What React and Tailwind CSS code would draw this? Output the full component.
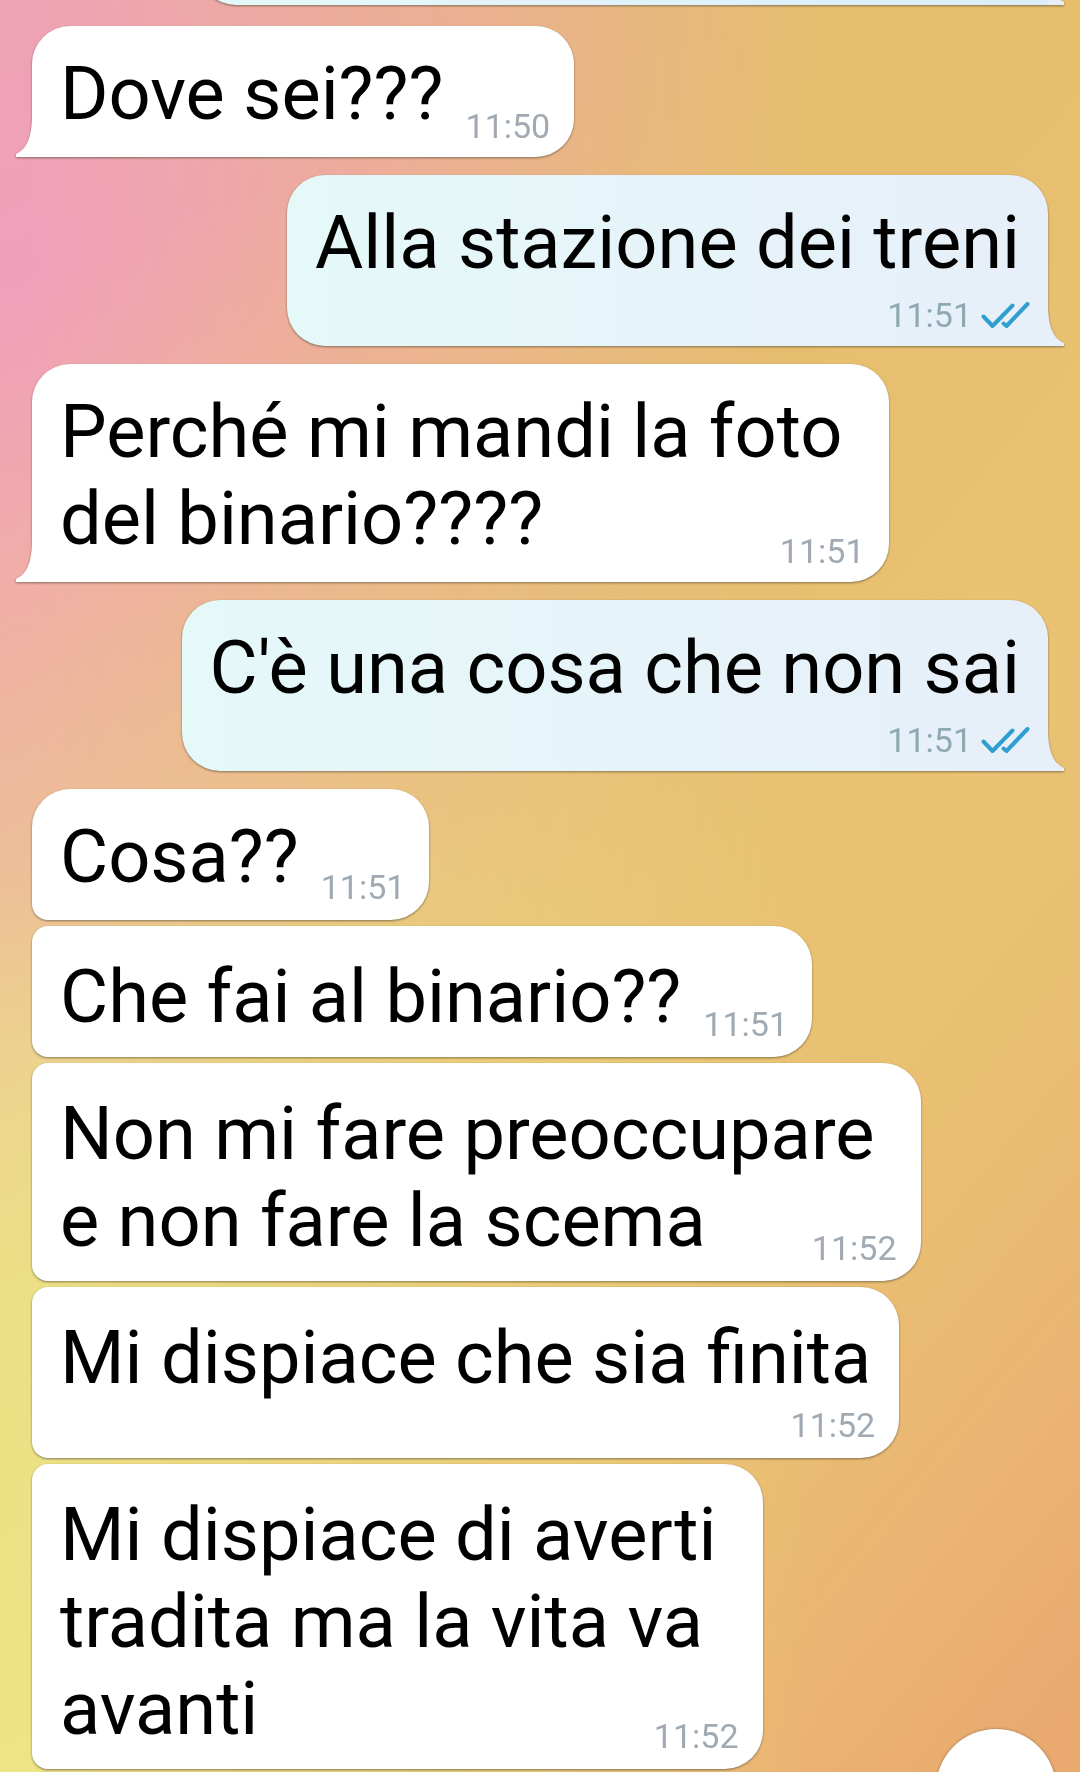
import React from "react";

const messages = [
  { text: "Dove sei???", time: "11:50", position: "single" },
  { text: "Alla stazione dei treni", time: "11:51", position: "single", mine: true },
  { text: "Perché mi mandi la foto\ndel binario????", time: "11:51", position: "single" },
  { text: "C'è una cosa che non sai", time: "11:51", position: "single", mine: true },
  { text: "Cosa??", time: "11:51", position: "first" },
  { text: "Che fai al binario??", time: "11:51", position: "middle" },
  { text: "Non mi fare preoccupare\ne non fare la scema", time: "11:52", position: "middle" },
  { text: "Mi dispiace che sia finita", time: "11:52", position: "middle", timeBelow: true },
  { text: "Mi dispiace di averti\ntradita ma la vita va\navanti", time: "11:52", position: "middle" },
];

// bubble shape depends on where the message sits in its group
const bubbleStyles = {
  single: "pt-6 pb-5 mb-[18px]",
  first: "pt-6 pb-5 mb-[6px] rounded-bl-2xl",
  middle: "pt-[27px] pb-[17px] mb-[6px] last:mb-0 rounded-l-2xl",
};

const timeStyles = {
  single: "-mb-[7px]",
  first: "-mb-[5px]",
  middle: "-mb-[2px]",
};

const Ticks = () => (
  <svg viewBox="0 0 50 26" className="w-[50px] h-[26px]" fill="none" stroke="#2f9fd0" strokeWidth="4" strokeLinecap="round" strokeLinejoin="round">
    <path d="M3.5 14.5L12.5 24L32.5 3.5" />
    <path d="M23.5 21.5L26.5 24L47.5 2" />
  </svg>
);

const Tail = ({ mine }) => (
  <svg
    viewBox="0 0 17 42"
    className={`absolute bottom-0 w-[17px] h-[42px] ${mine ? "left-full -ml-px" : "right-full -mr-px"}`}
    fill={mine ? "#e7eff9" : "#ffffff"}
  >
    {mine ? (
      <path d="M0 0H1C1 22 6 34 17 39V42H0Z" />
    ) : (
      <path d="M17 0H16C16 22 11 34 0 39V42H17Z" />
    )}
  </svg>
);

const Message = ({ message }) => {
  const { text, time, position, mine, timeBelow } = message;
  const lines = text.split("\n");
  const lastLine = lines.pop();
  const side = mine
    ? "self-end rounded-br-none bg-linear-to-r from-[#e5f9f9] to-[#e7eff9]"
    : "self-start bg-white";
  const corner = position === "single" && !mine ? "rounded-bl-none" : "";

  let rowStyle = "flex items-end justify-between gap-[22px]";
  if (mine) rowStyle = "flex flex-col gap-[11px]";
  else if (timeBelow) rowStyle = "flex flex-col gap-[6px]";

  return (
    <li
      className={`relative rounded-[38px] px-7 text-[74px] leading-[87px] text-black drop-shadow-[0_1px_1px_rgba(90,80,60,0.7)] ${side} ${corner} ${bubbleStyles[position]}`}
    >
      {lines.map((line) => (
        <p key={line} className="pr-[18px]">{line}</p>
      ))}
      <div className={rowStyle}>
        <p>{lastLine}</p>
        <div
          className={`flex items-center gap-2 self-end text-[34px] leading-9 ${timeStyles[position]} ${
            mine ? "-mr-[10px] text-[#8fa9b1]" : "-mr-1 text-[#a1aab3]"
          }`}
        >
          <time>{time}</time>
          {mine && <Ticks />}
        </div>
      </div>
      {position === "single" && <Tail mine={mine} />}
    </li>
  );
};

const App = () => {
  return (
    <main className="relative min-h-screen overflow-hidden font-[Roboto,sans-serif] bg-[linear-gradient(130deg,#e7bf74_0%,#e6be6d_42%,#e9c272_60%,#e9c072_72%,#e9ba72_80%,#ebb373_88%,#e9a96f_98%)]">
      <div className="absolute inset-0 bg-[linear-gradient(160deg,#eea3b4_0%,#f09fbb_13%,#f0ada8_27%,#eeb4a0_32%,#edbf97_41%,#ecce90_47%,#ecd78c_52%,#ecdf85_60%,#eee385_82%)] mask-r-from-3% mask-r-to-76%" />
      <div className="relative ml-[198px] mr-8 -mt-[75px] h-20 rounded-l-[38px] bg-linear-to-r from-[#e5f9f9] to-[#dcecfa] drop-shadow-[0_1px_1px_rgba(90,80,60,0.7)]">
        <Tail mine />
      </div>
      <ul className="flex flex-col px-8 pt-[21px]">
        {messages.map((message) => (
          <Message key={message.text} message={message} />
        ))}
      </ul>
      <button
        aria-label="Scroll to bottom"
        className="absolute right-6 -bottom-[77px] size-[120px] rounded-full bg-white shadow-[0_0_3px_rgba(110,90,60,0.7)]"
      />
    </main>
  );
};

export default App;
